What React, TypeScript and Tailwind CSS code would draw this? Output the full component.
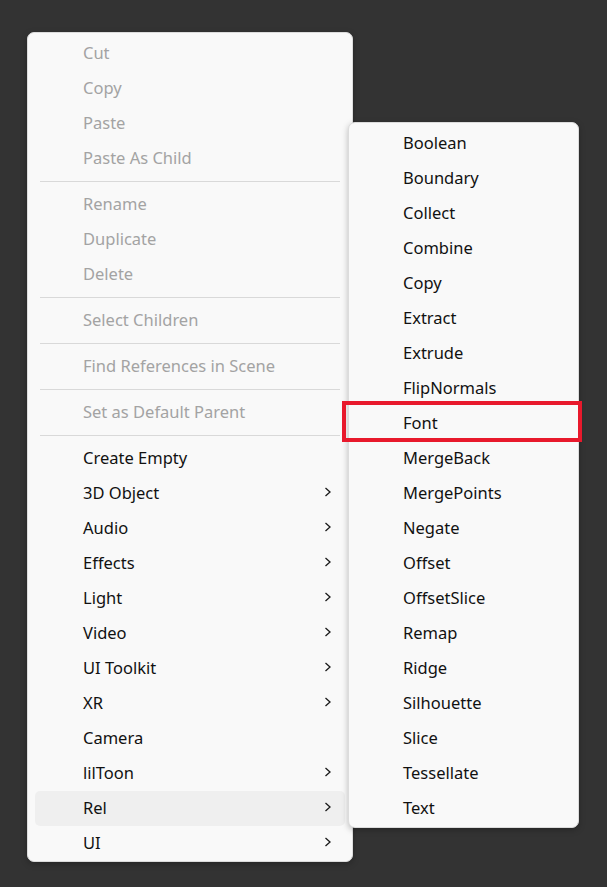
import React from "react";

type Item = { label: string; disabled?: boolean; sub?: boolean; active?: boolean } | "sep";

const mainItems: Item[] = [
  { label: "Cut", disabled: true },
  { label: "Copy", disabled: true },
  { label: "Paste", disabled: true },
  { label: "Paste As Child", disabled: true },
  "sep",
  { label: "Rename", disabled: true },
  { label: "Duplicate", disabled: true },
  { label: "Delete", disabled: true },
  "sep",
  { label: "Select Children", disabled: true },
  "sep",
  { label: "Find References in Scene", disabled: true },
  "sep",
  { label: "Set as Default Parent", disabled: true },
  "sep",
  { label: "Create Empty" },
  { label: "3D Object", sub: true },
  { label: "Audio", sub: true },
  { label: "Effects", sub: true },
  { label: "Light", sub: true },
  { label: "Video", sub: true },
  { label: "UI Toolkit", sub: true },
  { label: "XR", sub: true },
  { label: "Camera" },
  { label: "lilToon", sub: true },
  { label: "Rel", sub: true, active: true },
  { label: "UI", sub: true },
];

const subItems = [
  "Boolean", "Boundary", "Collect", "Combine", "Copy", "Extract", "Extrude",
  "FlipNormals", "Font", "MergeBack", "MergePoints", "Negate", "Offset",
  "OffsetSlice", "Remap", "Ridge", "Silhouette", "Slice", "Tessellate", "Text",
];

function Chevron() {
  return (
    <svg width="10" height="12" viewBox="0 0 10 12" className="absolute right-[12px] top-[10px]">
      <path d="M2.5 2 L7 6 L2.5 10" fill="none" stroke="#1a1a1a" strokeWidth="1.3" />
    </svg>
  );
}

export default function App() {
  return (
    <div
      className="relative w-[607px] h-[887px] bg-[#333333] overflow-hidden"
      style={{ fontFamily: '"Noto Sans", "Open Sans", sans-serif' }}
    >
      {/* main menu */}
      <div className="absolute left-[27px] top-[32px] w-[326px] h-[830px] rounded-[7px] bg-[#f9f9f9] border border-[#dcdcdc] pt-[3px] px-[7px] shadow-[0_2px_6px_rgba(0,0,0,0.25)]">
        {mainItems.map((it, i) =>
          it === "sep" ? (
            <div key={i} className="h-[11px] flex items-center px-[5px]">
              <div className="h-px w-full bg-[#d9d9d9]" />
            </div>
          ) : (
            <div
              key={i}
              className={`relative h-[35px] flex items-center pl-[48px] text-[16.5px] rounded-[5px] ${
                it.active ? "bg-[#efefef]" : ""
              } ${it.disabled ? "text-[#a3a3a3]" : "text-[#111111]"}`}
            >
              {it.label}
              {it.sub && <Chevron />}
            </div>
          )
        )}
      </div>

      {/* submenu */}
      <div className="absolute left-[348px] top-[122px] w-[231px] h-[706px] rounded-[7px] bg-[#f9f9f9] border border-[#dcdcdc] pt-[3px] px-[4px] shadow-[0_2px_6px_rgba(0,0,0,0.25)]">
        {subItems.map((s) => (
          <div key={s} className="h-[35px] flex items-center pl-[50px] text-[16.5px] text-[#111111]">
            {s}
          </div>
        ))}
      </div>

      {/* highlight box */}
      <div className="absolute left-[342px] top-[401px] w-[240px] h-[41px] border-[4px] border-[#e8192c]" />
    </div>
  );
}
